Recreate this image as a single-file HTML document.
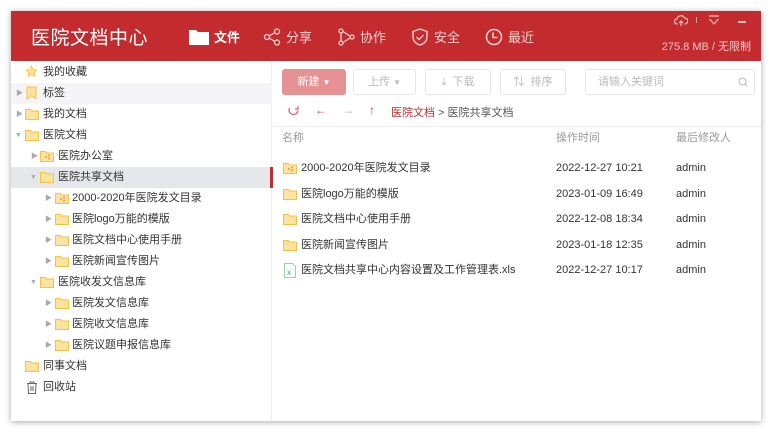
<!DOCTYPE html>
<html><head><meta charset="utf-8"><style>
*{margin:0;padding:0;box-sizing:border-box}
body{width:773px;height:433px;background:#fff;font-family:"Liberation Sans","Noto Sans CJK SC",sans-serif;position:relative;overflow:hidden;color:#333}
.win{position:absolute;left:11px;top:11px;width:750px;height:410px;background:#fff;box-shadow:0 1px 6px rgba(0,0,0,.35)}
.hdr{position:absolute;left:0;top:0;width:750px;height:50px;background:#c42b2e;color:#fff}
.logo{position:absolute;left:20px;top:12px;font-size:19px;letter-spacing:0.5px}
.nav{position:absolute;top:16px;font-size:13px;display:flex;align-items:center;gap:5px;color:#f4d0d0}
.nav svg{display:block}
.left{position:absolute;left:0;top:50px;width:261px;height:360px;border-right:1px solid #eee}
.row{position:absolute;left:0;width:261px;height:21px;font-size:11px;line-height:21px;color:#333}
.row .ar{position:absolute;top:0;font-size:7px;color:#aaa}
.row .ic{position:absolute;top:4px}
.row .t{position:absolute;top:0}
.sel{background:#e6e7eb}
.sel:after{content:"";position:absolute;right:-1px;top:0;width:3px;height:21px;background:#c42b2e}
.btn{position:absolute;top:58px;height:26px;border:1px solid #e6e6e6;border-radius:3px;font-size:11px;color:#bbb;line-height:24px;text-align:center}
.fr{position:absolute;left:261px;height:25px;font-size:11px;line-height:25px;width:489px}
.fr span{position:absolute}
</style></head><body>
<div class="win">
<div class="hdr">
 <div class="logo">医院文档中心</div>
 <div class="nav" style="left:178px;color:#fff;font-weight:bold"><svg width="20" height="16" viewBox="0 0 20 16"><path d="M0 1h7l2 2h11v13H0z" fill="#fff"/></svg>文件</div>
 <div class="nav" style="left:252px"><svg width="18" height="18" viewBox="0 0 18 18" fill="none" stroke="#f4d0d0" stroke-width="1.3"><circle cx="4" cy="9" r="2.5"/><circle cx="14" cy="3.5" r="2.5"/><circle cx="14" cy="14.5" r="2.5"/><path d="M6 8l6-3.5M6 10l6 3.5"/></svg>分享</div>
 <div class="nav" style="left:326px"><svg width="18" height="18" viewBox="0 0 18 18" fill="none" stroke="#f4d0d0" stroke-width="1.3"><circle cx="4" cy="3" r="2"/><circle cx="4" cy="15" r="2"/><circle cx="15" cy="9" r="2"/><path d="M4 5v8M6 3.5l7 4.5M6 14.5l7-4.5"/></svg>协作</div>
 <div class="nav" style="left:400px"><svg width="18" height="18" viewBox="0 0 18 18" fill="none" stroke="#f4d0d0" stroke-width="1.4"><path d="M9 1l7 2.5v5C16 13 13 16 9 17 5 16 2 13 2 8.5v-5z"/><path d="M5.5 9l2.5 2.5 4.5-4.5"/></svg>安全</div>
 <div class="nav" style="left:474px"><svg width="18" height="18" viewBox="0 0 18 18" fill="none" stroke="#f4d0d0" stroke-width="1.5"><circle cx="9" cy="9" r="7.5"/><path d="M8 4.5v5h4.5"/></svg>最近</div>
 <svg style="position:absolute;left:663px;top:4px" width="14" height="12" viewBox="0 0 14 12" fill="none" stroke="#f4c0c0" stroke-width="1.2"><path d="M3.5 9H3a2.5 2.5 0 010-5 4 4 0 017.5-1A3 3 0 0111 9h-.5M7 6v5M5 8l2-2 2 2"/></svg>
 <div style="position:absolute;left:685px;top:6px;width:1px;height:6px;background:#e8a0a0"></div>
 <svg style="position:absolute;left:697px;top:4px" width="12" height="10" viewBox="0 0 12 10" fill="none" stroke="#f4c0c0" stroke-width="1.2"><path d="M1 1h10M1.5 4l4.5 5 4.5-5"/></svg>
 <div style="position:absolute;left:727px;top:10px;width:8px;height:2px;background:#f4c0c0"></div>
 <div style="position:absolute;right:10px;top:27px;font-size:11px;color:#f2c8c8">275.8 MB / 无限制</div>
</div>
<div class="left">
 <div class="row" style="top:1px"><svg class="ic" style="left:14px;top:3px" width="13" height="13" viewBox="0 0 24 24"><path d="M12 2l3 6.5 7 .8-5.2 4.8 1.5 7L12 17.5 5.7 21l1.5-7L2 9.3l7-.8z" fill="#fde3a0" stroke="#f5c242" stroke-width="1.5"/></svg><span class="t" style="left:32px">我的收藏</span></div>
 <div class="row" style="top:22px;background:#f5f5f7"><span class="ar" style="left:5px">▶</span><svg class="ic" style="left:15px;top:3px" width="11" height="14" viewBox="0 0 11 14"><path d="M1 1h9v12L5.5 9.5 1 13z" fill="#fde3a0" stroke="#f5c242"/></svg><span class="t" style="left:32px">标签</span></div>
 <div class="row" style="top:43px"><span class="ar" style="left:5px">▶</span><svg class="ic" style="left:14px" width="14" height="12" viewBox="0 0 14 12"><path d="M.5 1.5h5l1 1.5h7v8.5H.5z" fill="#fde3a0" stroke="#f5c242"/></svg><span class="t" style="left:32px">我的文档</span></div>
 <div class="row" style="top:64px"><span class="ar" style="left:4px">▼</span><svg class="ic" style="left:14px" width="14" height="12" viewBox="0 0 14 12"><path d="M.5 1.5h5l1 1.5h7v8.5H.5z" fill="#fde3a0" stroke="#f5c242"/></svg><span class="t" style="left:32px">医院文档</span></div>
 <div class="row" style="top:85px"><span class="ar" style="left:20px">▶</span><svg class="ic" style="left:29px" width="14" height="12" viewBox="0 0 14 12"><path d="M.5 1.5h5l1 1.5h7v8.5H.5z" fill="#fde3a0" stroke="#f5c242"/><circle cx="6" cy="7" r="1" fill="#e89a3c"/><circle cx="9" cy="5.5" r="1" fill="#e89a3c"/><circle cx="9" cy="8.5" r="1" fill="#e89a3c"/></svg><span class="t" style="left:47px">医院办公室</span></div>
 <div class="row sel" style="top:106px"><span class="ar" style="left:19px">▼</span><svg class="ic" style="left:29px" width="14" height="12" viewBox="0 0 14 12"><path d="M.5 1.5h5l1 1.5h7v8.5H.5z" fill="#fde3a0" stroke="#f5c242"/></svg><span class="t" style="left:47px">医院共享文档</span></div>
 <div class="row" style="top:127px"><span class="ar" style="left:34px">▶</span><svg class="ic" style="left:44px" width="14" height="12" viewBox="0 0 14 12"><path d="M.5 1.5h5l1 1.5h7v8.5H.5z" fill="#fde3a0" stroke="#f5c242"/><circle cx="6" cy="7" r="1" fill="#e89a3c"/><circle cx="9" cy="5.5" r="1" fill="#e89a3c"/><circle cx="9" cy="8.5" r="1" fill="#e89a3c"/></svg><span class="t" style="left:61px">2000-2020年医院发文目录</span></div>
 <div class="row" style="top:148px"><span class="ar" style="left:34px">▶</span><svg class="ic" style="left:44px" width="14" height="12" viewBox="0 0 14 12"><path d="M.5 1.5h5l1 1.5h7v8.5H.5z" fill="#fde3a0" stroke="#f5c242"/></svg><span class="t" style="left:61px">医院logo万能的模版</span></div>
 <div class="row" style="top:169px"><span class="ar" style="left:34px">▶</span><svg class="ic" style="left:44px" width="14" height="12" viewBox="0 0 14 12"><path d="M.5 1.5h5l1 1.5h7v8.5H.5z" fill="#fde3a0" stroke="#f5c242"/></svg><span class="t" style="left:61px">医院文档中心使用手册</span></div>
 <div class="row" style="top:190px"><span class="ar" style="left:34px">▶</span><svg class="ic" style="left:44px" width="14" height="12" viewBox="0 0 14 12"><path d="M.5 1.5h5l1 1.5h7v8.5H.5z" fill="#fde3a0" stroke="#f5c242"/></svg><span class="t" style="left:61px">医院新闻宣传图片</span></div>
 <div class="row" style="top:211px"><span class="ar" style="left:19px">▼</span><svg class="ic" style="left:29px" width="14" height="12" viewBox="0 0 14 12"><path d="M.5 1.5h5l1 1.5h7v8.5H.5z" fill="#fde3a0" stroke="#f5c242"/></svg><span class="t" style="left:47px">医院收发文信息库</span></div>
 <div class="row" style="top:232px"><span class="ar" style="left:34px">▶</span><svg class="ic" style="left:44px" width="14" height="12" viewBox="0 0 14 12"><path d="M.5 1.5h5l1 1.5h7v8.5H.5z" fill="#fde3a0" stroke="#f5c242"/></svg><span class="t" style="left:61px">医院发文信息库</span></div>
 <div class="row" style="top:253px"><span class="ar" style="left:34px">▶</span><svg class="ic" style="left:44px" width="14" height="12" viewBox="0 0 14 12"><path d="M.5 1.5h5l1 1.5h7v8.5H.5z" fill="#fde3a0" stroke="#f5c242"/></svg><span class="t" style="left:61px">医院收文信息库</span></div>
 <div class="row" style="top:274px"><span class="ar" style="left:34px">▶</span><svg class="ic" style="left:44px" width="14" height="12" viewBox="0 0 14 12"><path d="M.5 1.5h5l1 1.5h7v8.5H.5z" fill="#fde3a0" stroke="#f5c242"/></svg><span class="t" style="left:61px">医院议题申报信息库</span></div>
 <div class="row" style="top:295px"><svg class="ic" style="left:14px" width="14" height="12" viewBox="0 0 14 12"><path d="M.5 1.5h5l1 1.5h7v8.5H.5z" fill="#fde3a0" stroke="#f5c242"/></svg><span class="t" style="left:32px">同事文档</span></div>
 <div class="row" style="top:316px"><svg class="ic" style="left:15px;top:4px" width="12" height="13" viewBox="0 0 12 13" fill="none" stroke="#666"><path d="M1 2.5h10M4 2.5V1h4v1.5M2 2.5l.5 10h7l.5-10M5 5v5M7 5v5"/></svg><span class="t" style="left:32px">回收站</span></div>
</div>
<div class="btn" style="left:271px;width:64px;background:#e69193;border-color:#e69193;color:#fff">新建 <span style="font-size:8px">▼</span></div>
<div class="btn" style="left:342px;width:63px">上传 <span style="font-size:8px">▼</span></div>
<div class="btn" style="left:414px;width:66px">⤓ &nbsp;下载</div>
<div class="btn" style="left:489px;width:66px">⇅ &nbsp;排序</div>
<div class="btn" style="left:574px;width:170px;text-align:left;padding-left:12px">请输入关键词<svg style="position:absolute;right:6px;top:7px" width="10" height="10" viewBox="0 0 10 10" fill="none" stroke="#bbb"><circle cx="4.5" cy="4.5" r="3.5"/><path d="M7 7l2 2"/></svg></div>
<div style="position:absolute;left:276px;top:92px;font-size:12px;color:#d05050;display:flex;gap:15px;align-items:center">
 <svg width="13" height="13" viewBox="0 0 13 13" fill="none" stroke="#d96060" stroke-width="1.2"><path d="M11 6.5A4.5 4.5 0 112.5 4M11 2v3H8"/></svg>
 <span style="color:#c84040">←</span><span style="color:#aaa">→</span><span style="color:#c84040">↑</span>
</div>
<div style="position:absolute;left:380px;top:93px;font-size:11px;color:#555"><span style="color:#c42b2e">医院文档</span> &gt; 医院共享文档</div>
<div style="position:absolute;left:262px;top:115px;width:488px;height:1px;background:#eee"></div>
<div class="fr" style="top:115px;color:#999"><span style="left:10px">名称</span><span style="left:284px">操作时间</span><span style="left:404px">最后修改人</span></div>
<div class="fr" style="top:145px"><svg style="position:absolute;left:11px;top:6px" width="14" height="12" viewBox="0 0 14 12"><path d="M.5 1.5h5l1 1.5h7v8.5H.5z" fill="#fde3a0" stroke="#f5c242"/><circle cx="6" cy="7" r="1" fill="#e89a3c"/><circle cx="9" cy="5.5" r="1" fill="#e89a3c"/><circle cx="9" cy="8.5" r="1" fill="#e89a3c"/></svg><span style="left:29px">2000-2020年医院发文目录</span><span style="left:284px">2022-12-27 10:21</span><span style="left:404px">admin</span></div>
<div class="fr" style="top:171px"><svg style="position:absolute;left:11px;top:6px" width="14" height="12" viewBox="0 0 14 12"><path d="M.5 1.5h5l1 1.5h7v8.5H.5z" fill="#fde3a0" stroke="#f5c242"/></svg><span style="left:29px">医院logo万能的模版</span><span style="left:284px">2023-01-09 16:49</span><span style="left:404px">admin</span></div>
<div class="fr" style="top:196px"><svg style="position:absolute;left:11px;top:6px" width="14" height="12" viewBox="0 0 14 12"><path d="M.5 1.5h5l1 1.5h7v8.5H.5z" fill="#fde3a0" stroke="#f5c242"/></svg><span style="left:29px">医院文档中心使用手册</span><span style="left:284px">2022-12-08 18:34</span><span style="left:404px">admin</span></div>
<div class="fr" style="top:222px"><svg style="position:absolute;left:11px;top:6px" width="14" height="12" viewBox="0 0 14 12"><path d="M.5 1.5h5l1 1.5h7v8.5H.5z" fill="#fde3a0" stroke="#f5c242"/></svg><span style="left:29px">医院新闻宣传图片</span><span style="left:284px">2023-01-18 12:35</span><span style="left:404px">admin</span></div>
<div class="fr" style="top:247px"><svg style="position:absolute;left:12px;top:5px" width="12" height="15" viewBox="0 0 12 15"><path d="M.5.5h8l3 3v11H.5z" fill="#fff" stroke="#8fd4a8"/><text x="3" y="12" font-size="8" fill="#3aa860" font-family="Liberation Sans">x</text></svg><span style="left:29px">医院文档共享中心内容设置及工作管理表.xls</span><span style="left:284px">2022-12-27 10:17</span><span style="left:404px">admin</span></div>
</div>
</body></html>
